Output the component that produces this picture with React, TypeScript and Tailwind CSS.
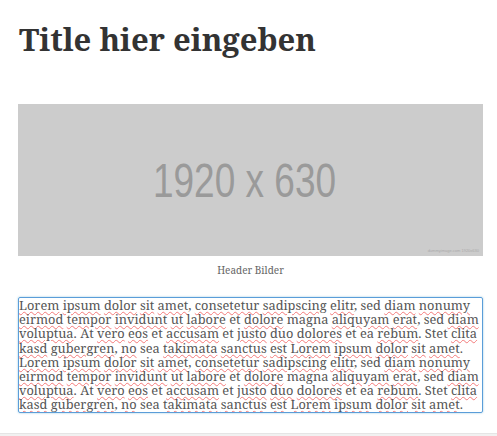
import React from 'react';

const serif = { fontFamily: '"Noto Serif", "DejaVu Serif", serif' };

// words flagged by the spell checker (red wavy underline)
const flagged = new Set([
  'Lorem', 'ipsum', 'dolor', 'sit', 'amet', 'consetetur', 'sadipscing', 'elitr', 'diam', 'nonumy',
  'eirmod', 'tempor', 'invidunt', 'ut', 'labore', 'dolore', 'aliquyam', 'erat',
  'voluptua', 'vero', 'eos', 'accusam', 'justo', 'duo', 'dolores', 'rebum', 'clita',
  'kasd', 'gubergren', 'no', 'takimata', 'sanctus', 'est',
]);

const lines = [
  'Lorem ipsum dolor sit amet, consetetur sadipscing elitr, sed diam nonumy',
  'eirmod tempor invidunt ut labore et dolore magna aliquyam erat, sed diam',
  'voluptua. At vero eos et accusam et justo duo dolores et ea rebum. Stet clita',
  'kasd gubergren, no sea takimata sanctus est Lorem ipsum dolor sit amet.',
];

function Line({ text }: { text: string }) {
  const parts = text.split(' ');
  return (
    <div className="whitespace-nowrap">
      {parts.map((p, i) => {
        const m = p.match(/^([A-Za-z]+)(.*)$/);
        const word = m ? m[1] : p;
        const rest = m ? m[2] : '';
        return (
          <React.Fragment key={i}>
            {flagged.has(word) ? (
              <span className="underline decoration-wavy decoration-[#f37a7a] decoration-[0.5px] underline-offset-[1px]">{word}</span>
            ) : (
              word
            )}
            {rest}
            {i < parts.length - 1 ? ' ' : ''}
          </React.Fragment>
        );
      })}
    </div>
  );
}

export default function App() {
  return (
    <div className="w-[497px] h-[436px] bg-white flex flex-col overflow-hidden">
      <div className="pl-[18px] pr-[14px] flex flex-col flex-1">
        {/* Title */}
        <h1 className="text-[31px] font-bold text-[#333] leading-none mt-[24px] ml-[1px]" style={serif}>
          Title hier eingeben
        </h1>

        {/* Header image placeholder */}
        <div className="mt-[49px] h-[152px] bg-[#cccccc] relative flex items-center justify-center pr-[12px]">
          <span
            className="inline-block text-[37px] text-[#9a9a9a] leading-none scale-y-[1.28]"
            style={{ fontFamily: '"Liberation Sans", Arial, sans-serif' }}
          >
            1920 x 630
          </span>
          <span className="absolute right-[4px] bottom-[2px] text-[4px] text-[#aaa]" style={{ fontFamily: '"Liberation Sans", sans-serif' }}>
            dummyimage.com 1920x630
          </span>
        </div>
        <p className="text-center text-[10px] text-[#666] mt-[7px]" style={serif}>
          Header Bilder
        </p>

        {/* Text content */}
        <div
          className="mt-[19px] h-[116px] border border-[#5b9dd9] rounded-[2px] overflow-hidden text-[12.8px] leading-[14.2px] text-[#555] shadow-[0_0_2px_rgba(30,140,190,0.5)]"
          style={serif}
        >
          {[...lines, ...lines].map((l, i) => (
            <Line key={i} text={l} />
          ))}
        </div>
      </div>
      <div className="h-[3px] bg-[#f1f1f1] border-t border-[#e5e5e5]" />
    </div>
  );
}
